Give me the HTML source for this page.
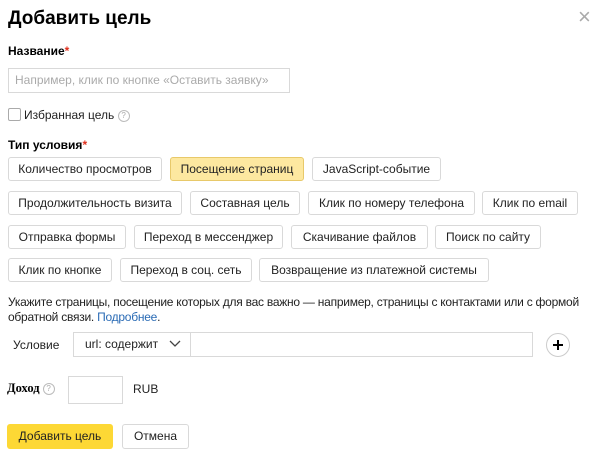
<!DOCTYPE html>
<html><head><meta charset="utf-8"><style>
body{margin:0;width:600px;height:450px;background:#fff;font-family:"Liberation Sans",Arial,sans-serif;color:#000;position:relative;overflow:hidden}
.a{position:absolute}
.b{position:absolute;height:24px;border:1px solid #d9d9d9;border-radius:3px;box-sizing:border-box;font-size:12px;line-height:22px;text-align:center;background:#fff;color:#222}
.y{background:#fde8a0;border-color:#e8c96a}
.lbl{font-size:12px;font-weight:bold}
.r{color:#e0301e}
.q{display:inline-block;width:10px;height:10px;border:1px solid #bbb;border-radius:50%;font-size:8px;line-height:10px;text-align:center;color:#aaa;vertical-align:middle;font-weight:normal}
</style></head><body>
<div class="a" style="left:8px;top:8px;font-size:19px;font-weight:bold">Добавить цель</div>
<div class="a" style="left:578px;top:4px;font-size:22px;color:#aaa;font-weight:300">×</div>
<div class="a lbl" style="left:8px;top:44px">Название<span class="r">*</span></div>
<div class="a" style="left:8px;top:68px;width:282px;height:25px;border:1px solid #d9d9d9;box-sizing:border-box;font-size:12px;line-height:23px;color:#aaa;padding-left:6px">Например, клик по кнопке «Оставить заявку»</div>
<div class="a" style="left:8px;top:108px;width:11px;height:11px;border:1px solid #aaa;border-radius:2px"></div>
<div class="a" style="left:24px;top:108px;font-size:12px;color:#222">Избранная цель <span class="q">?</span></div>
<div class="a lbl" style="left:8px;top:138px">Тип условия<span class="r">*</span></div>

<div class="b" style="left:8px;top:157px;width:154px">Количество просмотров</div>
<div class="b y" style="left:170px;top:157px;width:134px">Посещение страниц</div>
<div class="b" style="left:312px;top:157px;width:129px">JavaScript-событие</div>
<div class="b" style="left:8px;top:191px;width:174px">Продолжительность визита</div>
<div class="b" style="left:190px;top:191px;width:110px">Составная цель</div>
<div class="b" style="left:308px;top:191px;width:167px">Клик по номеру телефона</div>
<div class="b" style="left:482px;top:191px;width:96px">Клик по email</div>
<div class="b" style="left:8px;top:225px;width:118px">Отправка формы</div>
<div class="b" style="left:134px;top:225px;width:149px">Переход в мессенджер</div>
<div class="b" style="left:291px;top:225px;width:137px">Скачивание файлов</div>
<div class="b" style="left:435px;top:225px;width:106px">Поиск по сайту</div>
<div class="b" style="left:8px;top:258px;width:104px">Клик по кнопке</div>
<div class="b" style="left:120px;top:258px;width:132px">Переход в соц. сеть</div>
<div class="b" style="left:259px;top:258px;width:230px">Возвращение из платежной системы</div>

<div class="a" style="left:8px;top:295px;width:592px;font-size:12px;line-height:15px;color:#222;letter-spacing:-0.25px">Укажите страницы, посещение которых для вас важно — например, страницы с контактами или с формой обратной связи. <span style="color:#2a6bb5">Подробнее</span>.</div>
<div class="a" style="left:13px;top:338px;font-size:12px;color:#222">Условие</div>
<div class="a" style="left:73px;top:332px;width:118px;height:25px;border:1px solid #d9d9d9;box-sizing:border-box;font-size:12px;line-height:23px;padding-left:11px;color:#222">url: содержит</div>
<svg class="a" style="left:169px;top:340px" width="12" height="8"><path d="M1 1l5 5 5-5" stroke="#444" fill="none" stroke-width="1.3"/></svg>
<div class="a" style="left:190px;top:332px;width:343px;height:25px;border:1px solid #d9d9d9;box-sizing:border-box"></div>
<div class="a" style="left:546px;top:333px;width:24px;height:24px;border:1px solid #ccc;border-radius:50%;box-sizing:border-box"></div>
<svg class="a" style="left:552px;top:339px" width="12" height="12"><path d="M6 1v10M1 6h10" stroke="#000" stroke-width="2"/></svg>

<div class="a" style="left:7px;top:381px;font-size:12.5px;font-weight:bold;font-family:'Liberation Serif',serif">Доход <span class="q" style="font-family:'Liberation Sans'">?</span></div>
<div class="a" style="left:68px;top:376px;width:55px;height:28px;border:1px solid #d9d9d9;box-sizing:border-box"></div>
<div class="a" style="left:133px;top:382px;font-size:12px;color:#222">RUB</div>

<div class="a" style="left:7px;top:424px;width:106px;height:25px;background:#fdd835;border-radius:3px;font-size:12px;line-height:25px;text-align:center;color:#222">Добавить цель</div>
<div class="b" style="left:122px;top:424px;width:67px;height:25px;line-height:23px">Отмена</div>
</body></html>
